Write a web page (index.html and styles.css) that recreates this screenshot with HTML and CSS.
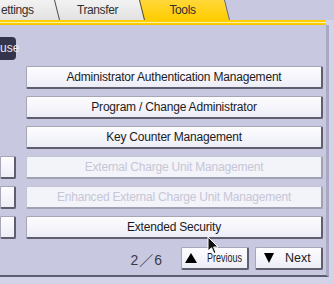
FILE: index.html
```html
<!DOCTYPE html>
<html lang="en">
<head>
    <meta charset="UTF-8">
    <meta name="viewport" content="width=device-width, initial-scale=1.0">
    <title>Tools</title>
    <link rel="stylesheet" href="styles.css">
</head>
<body>
    <div class="screen">
        <div class="tabs">
            <div class="tab first">ettings</div>
            <div class="tab second">Transfer</div>
            <div class="tab third active">Tools</div>
        </div>
        <div class="band"></div>

        <div class="panel">
            <!-- left column, mostly cut off -->
            <div class="side">
                <div class="use">use</div>
                <div class="side-group">
                    <div class="btn"></div>
                    <div class="btn"></div>
                    <div class="btn"></div>
                </div>
            </div>

            <div class="main">
                <div class="list">
                    <div class="btn">Administrator Authentication Management</div>
                    <div class="btn">Program / Change Administrator</div>
                    <div class="btn">Key Counter Management</div>
                    <div class="btn off">External Charge Unit Management</div>
                    <div class="btn off">Enhanced External Charge Unit Management</div>
                    <div class="btn">Extended Security</div>
                </div>
                <div class="pager">
                    <span class="count">2／6</span>
                    <div class="btn page-btn prev">
                        <span class="tri-up"></span>
                        <span class="label">Previous</span>
                    </div>
                    <div class="btn page-btn next">
                        <span class="tri-down"></span>
                        <span class="label">Next</span>
                    </div>
                </div>
            </div>
        </div>

        <svg class="cursor" width="13" height="20" viewBox="0 0 13 20">
            <path d="M1 1 L1 15 L4.5 11.8 L7 17.5 L9 16.6 L6.6 11 L11 11 Z" fill="#111" stroke="#fff" stroke-width="1"/>
        </svg>
    </div>
</body>
</html>
```

FILE: styles.css
```css
*{
    margin: 0;
    padding: 0;
    box-sizing: border-box;
}
body{
    font-family: "Liberation Sans", Arial, sans-serif;
    background-color: #d2d2e8;
}

.screen{
    position: relative;
    width: 334px;
    height: 284px;
    overflow: hidden;
    background-color: #d2d2e8;
}

/* tabs */
.tabs{
    display: flex;
    height: 20px;
    background-color: #c8c8e0;
}
.tab{
    position: relative;
    width: 85px;
    height: 20px;
    line-height: 20px;
    font-size: 12px;
    letter-spacing: -0.4px;
    color: #303030;
    text-align: center;
}
.tab::before{
    content: "";
    position: absolute;
    top: 0;
    bottom: 0;
    left: -20px;
    right: 0;
    background: linear-gradient(#f2f2f2, #e2e2e2);
    border-right: 1px solid #4c4c4c;
    transform: skewX(14deg);
    transform-origin: top;
    z-index: -1;
}
.tab.first{
    width: 55px;
    text-align: left;
    padding-left: 1px;
    z-index: 3;
}
.tab.second{
    z-index: 2;
}
.tab.third{
    z-index: 1;
}
.tab.active::before{
    background: linear-gradient(#ffd83a, #ffcc00);
    border-right-color: #6a6a6a;
}
.band{
    width: 326px;
    height: 5px;
    background: linear-gradient(#ffd000 0, #ffd000 2px, #fff2a6 2px, #fff2a6 3px, #ffd000 3px, #f2c200 5px);
}

/* panel */
.panel{
    display: flex;
    width: 329px;
    height: 252px;
    background-color: #c8c8e0;
    border-right: 3px solid #a9a9c3;
    border-bottom: 2px solid #5c5c72;
}
.side{
    width: 16px;
    padding-top: 12px;
    display: flex;
    flex-direction: column;
}
.use{
    height: 23px;
    line-height: 23px;
    background-color: #34344c;
    color: #ececf4;
    font-size: 12px;
    text-align: right;
    padding-right: 2px;
    border-radius: 0 4px 4px 0;
}
.side-group{
    margin-top: 96px;
    display: flex;
    flex-direction: column;
    gap: 7px;
}
.main{
    width: 297px;
    margin-left: 10px;
    padding-top: 41px;
    display: flex;
    flex-direction: column;
}
.list{
    display: flex;
    flex-direction: column;
    gap: 7px;
}

.btn{
    height: 23px;
    display: flex;
    align-items: center;
    justify-content: center;
    background: linear-gradient(#fdfdff, #ededf7);
    border: 1px solid #a6a6b6;
    border-right: 2px solid #5e5e6e;
    border-bottom: 2px solid #5e5e6e;
    border-radius: 2px;
    font-size: 12px;
    letter-spacing: -0.2px;
    color: #1c1c1c;
    white-space: nowrap;
}
.btn.off{
    color: #c6c6d6;
    background: #f3f3fa;
    border-color: #c4c4d2;
    border-right-color: #a0a0b2;
    border-bottom-color: #a0a0b2;
}

/* pager */
.pager{
    margin-top: 8px;
    display: flex;
    align-items: center;
    justify-content: flex-end;
    gap: 6px;
}
.count{
    font-family: "Liberation Sans", "Noto Sans CJK JP", sans-serif;
    font-size: 14px;
    letter-spacing: 1px;
    color: #3a3a48;
    margin-right: 12px;
}
.page-btn{
    width: 68px;
    justify-content: flex-start;
    font-size: 12.5px;
    letter-spacing: 0;
}
.prev{
    padding-left: 3px;
}
.prev .label{
    display: inline-block;
    width: 34px;
    margin-left: 10px;
    transform: scaleX(0.72);
    transform-origin: left;
}
.next{
    padding-left: 8px;
}
.next .label{
    margin-left: 11px;
}
.tri-up{
    width: 0;
    height: 0;
    border-left: 6px solid transparent;
    border-right: 6px solid transparent;
    border-bottom: 10px solid #000;
}
.tri-down{
    width: 0;
    height: 0;
    border-left: 5px solid transparent;
    border-right: 5px solid transparent;
    border-top: 10px solid #000;
}

.cursor{
    position: absolute;
    left: 207px;
    top: 236px;
}
```
